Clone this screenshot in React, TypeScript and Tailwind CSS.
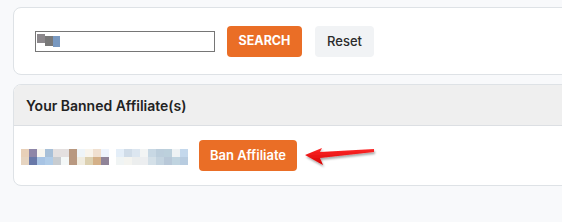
import React from 'react'

const pixRow1a = ['#e8d0b8', '#8e86a8', '#f8f6f0', '#a8c0d8', '#e4e0e0', '#e4e0e0', '#b89880', '#eef4f8', '#f8f4ec', '#f0e0d0', '#eef4fc']
const pixRow2a = ['#e6d4c0', '#6878a8', '#a8c4e4', '#b0cce8', '#c8ccd0', '#f4f8f8', '#b89880', '#f0ece0', '#dcd0b0', '#d4b088', '#908498']
const pixRow1b = ['#e4eef8', '#d0dce8', '#dce6f0', '#f2f4f4', '#c8d8e4', '#bccedc', '#bcd0dc', '#eef2f4', '#c4d8ec']
const pixRow2b = ['#f0f4f4', '#f4f4f0', '#eceeee', '#eceef0', '#d4e0e8', '#c4d4e0', '#b8c8d8', '#c0d4e0', '#b8cce0']

function Pixels({ top, bottom }: { top: string[]; bottom: string[] }) {
  return (
    <div className="flex flex-col">
      <div className="flex">
        {top.map((c, i) => (
          <div key={i} className="h-[8px] w-[8px]" style={{ background: c }} />
        ))}
      </div>
      <div className="flex">
        {bottom.map((c, i) => (
          <div key={i} className="h-[8px] w-[8px]" style={{ background: c }} />
        ))}
      </div>
    </div>
  )
}

function RedArrow() {
  return (
    <svg width="74" height="24" viewBox="0 0 74 24" className="overflow-visible">
      <defs>
        <linearGradient id="ar" x1="0" y1="0" x2="0" y2="1">
          <stop offset="0" stopColor="#ff2a2a" />
          <stop offset="1" stopColor="#d40000" />
        </linearGradient>
        <filter id="sh" x="-20%" y="-50%" width="140%" height="200%">
          <feDropShadow dx="1" dy="2" stdDeviation="1.2" floodColor="#000" floodOpacity="0.35" />
        </filter>
      </defs>
      <path
        d="M2 11 L19 4 L17 8 L71 5 L71 8 L17 14 L20 21 Z"
        fill="url(#ar)"
        filter="url(#sh)"
      />
    </svg>
  )
}

export default function App() {
  return (
    <div
      className="min-h-[222px] w-full overflow-hidden bg-[#f8f9fb] pl-[13px] pt-[7px]"
      style={{ fontFamily: 'Inter, "Noto Sans", sans-serif' }}
    >
      <div className="w-[600px]">
        {/* Search card */}
        <div className="flex items-center rounded-lg border border-[#dee2e6] bg-white pb-[17px] pl-[21px] pt-[18px]">
          <div className="flex h-[21px] w-[180px] items-center border border-[#767676] px-[1px]">
            <div className="flex">
              <div className="mt-[-2px] h-[9px] w-[8px] bg-[#8c888c]" />
              <div className="h-[10px] w-[8px] bg-[#787878]" />
              <div className="h-[11px] w-[7px] bg-[#7898c0]" />
            </div>
          </div>
          <button className="ml-[12px] flex h-[31px] w-[75px] items-center justify-center rounded-[4px] bg-[#ea6e26] text-[12.5px] font-bold text-white">
            SEARCH
          </button>
          <button className="ml-[13px] flex h-[31px] w-[59px] items-center justify-center rounded-[4px] bg-[#f1f3f5] text-[13px] font-medium text-[#2b2b2b]">
            Reset
          </button>
        </div>

        {/* Banned list card */}
        <div className="mt-[9px] overflow-hidden rounded-lg border border-[#dee2e6] bg-white">
          <div className="flex h-[41px] items-center border-b border-[#dcdfe3] bg-[#efefef] pl-[12px] text-[14px] font-semibold text-[#222]">
            Your Banned Affiliate(s)
          </div>
          <div className="flex h-[59px] items-center pl-[7px]">
            <div className="mt-[3px] flex gap-[7px]">
              <Pixels top={pixRow1a} bottom={pixRow2a} />
              <Pixels top={pixRow1b} bottom={pixRow2b} />
            </div>
            <button className="ml-[11px] flex h-[31px] w-[98px] items-center justify-center rounded-[4px] bg-[#ea6e26] text-[13px] font-semibold text-white">
              Ban Affiliate
            </button>
            <div className="ml-[6px]">
              <RedArrow />
            </div>
          </div>
        </div>
      </div>
    </div>
  )
}
